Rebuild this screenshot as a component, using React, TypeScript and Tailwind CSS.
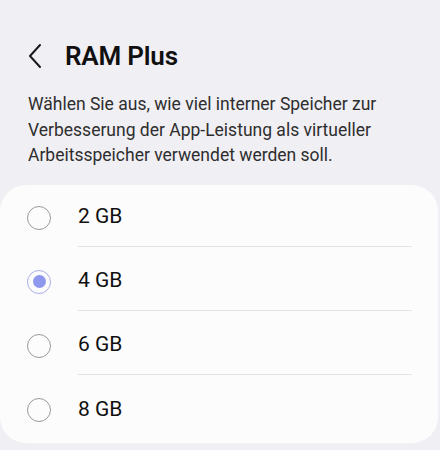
import React, { useState } from 'react';

const OPTIONS = ['2 GB', '4 GB', '6 GB', '8 GB'];

const Radio: React.FC<{ checked: boolean }> = ({ checked }) => (
  <span
    className={`flex h-[24px] w-[24px] shrink-0 items-center justify-center rounded-full border-[1.5px] ${
      checked ? 'border-[#a9ade6]' : 'border-[#9a9a9a]'
    }`}
  >
    {checked && <span className="h-[13px] w-[13px] rounded-full bg-[#8f97ee]" />}
  </span>
);

const App: React.FC = () => {
  const [selected, setSelected] = useState('4 GB');

  return (
    <div className="h-[450px] w-[440px] overflow-hidden bg-[#f0eff4] font-['Roboto',sans-serif] text-[#101010]">
      <div className="flex h-[32px] mt-[40px] items-center pl-[27px]">
        <svg width="18" height="26" viewBox="0 0 18 26" fill="none" className="mr-[20px]">
          <path d="M13 2 L3 13 L13 24" stroke="#1a1a1a" strokeWidth="2" strokeLinecap="round" strokeLinejoin="round" />
        </svg>
        <h1 className="text-[26px] font-semibold tracking-[-0.2px]">RAM Plus</h1>
      </div>
      <p className="mt-[20px] px-[28px] text-[17.5px] leading-[25.5px] text-[#2e2e2e]">
        Wählen Sie aus, wie viel interner Speicher zur Verbesserung der App-Leistung als virtueller Arbeitsspeicher verwendet werden soll.
      </p>
      <div className="mt-[16px] mr-[2px] rounded-[26px] bg-[#fcfcfc] pt-[1px] pb-[1px]">
        {OPTIONS.map((opt, i) => (
          <button
            key={opt}
            onClick={() => setSelected(opt)}
            className="flex h-[64px] w-full items-center pl-[27px] text-left"
          >
            <Radio checked={selected === opt} />
            <span
              className={`ml-[27px] mr-[26px] flex flex-1 items-center text-[21px] ${
                i < OPTIONS.length - 1 ? 'h-[61px] self-start border-b border-[#e4e4e6] pt-[3px]' : 'h-full'
              }`}
            >
              {opt}
            </span>
          </button>
        ))}
      </div>
    </div>
  );
};

export default App;
